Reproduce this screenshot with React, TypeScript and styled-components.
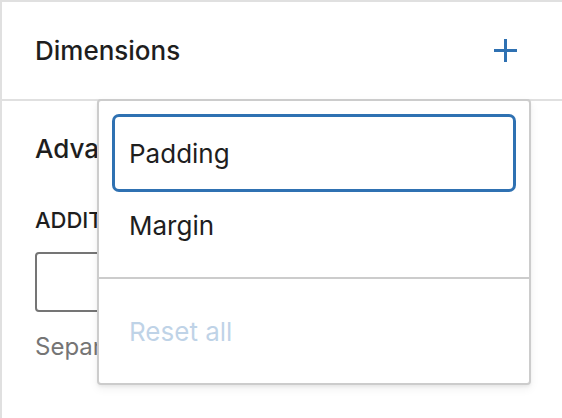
import React from "react";
import styled, { createGlobalStyle } from "styled-components";

const Global = createGlobalStyle`
  html, body { margin: 0; padding: 0; background: #fff; }
  body {
    font-family: Inter, "Noto Sans", "Liberation Sans", sans-serif;
    color: #1e1e1e;
    -webkit-font-smoothing: antialiased;
  }
  * { box-sizing: border-box; }
`;

const BLUE = "#2f71b2";

const Sidebar = styled.div`
  position: relative;
  width: 562px;
  height: 418px;
  overflow: hidden;
  border-top: 2px solid #e0e0e0;
  border-left: 2px solid #e0e0e0;
  background: #fff;
`;

const PanelHeader = styled.div`
  height: 99px;
  padding: 0 32px 0 33px;
  display: flex;
  align-items: center;
  justify-content: space-between;
  border-bottom: 2px solid #e0e0e0;
`;

const PanelTitle = styled.h2`
  margin: 0;
  font-size: 26px;
  line-height: 32px;
  font-weight: 500;
  color: #1e1e1e;
  white-space: nowrap;
`;

const IconButton = styled.button`
  width: 48px;
  height: 48px;
  padding: 0;
  border: none;
  background: transparent;
  display: flex;
  align-items: center;
  justify-content: center;
  color: ${BLUE};
`;

const PanelBody = styled.div`
  padding: 32px 32px 0 33px;
  display: flex;
  flex-direction: column;
`;

const FieldLabel = styled.label`
  margin-top: 39px;
  font-size: 22px;
  line-height: 32px;
  font-weight: 500;
  text-transform: uppercase;
  color: #1e1e1e;
  white-space: nowrap;
`;

const TextInput = styled.input`
  margin-top: 16px;
  height: 60px;
  width: 100%;
  border: 2px solid #757575;
  border-radius: 4px;
  background: #fff;
  font: inherit;
`;

const Help = styled.p`
  margin: 19px 0 0;
  font-size: 24px;
  line-height: 32px;
  color: #757575;
  white-space: nowrap;
`;

const Popover = styled.div`
  position: absolute;
  left: 95px;
  top: 97px;
  width: 434px;
  background: #fff;
  border: 2px solid #cccccc;
  border-radius: 4px;
  box-shadow: 0 2px 3px rgba(0, 0, 0, 0.05), 0 4px 10px rgba(0, 0, 0, 0.06);
`;

const Group = styled.div`
  padding: 16px;
  display: flex;
  flex-direction: column;
`;

const Divider = styled.div`
  height: 2px;
  background: #cccccc;
`;

const Item = styled.button<{ $focused?: boolean; $disabled?: boolean }>`
  position: relative;
  z-index: ${(p) => (p.$focused ? 1 : 0)};
  height: 72px;
  padding: 0 14px;
  display: flex;
  align-items: center;
  border: none;
  border-radius: 4px;
  background: transparent;
  font-family: inherit;
  font-size: 26px;
  font-weight: 400;
  text-align: left;
  color: ${(p) => (p.$disabled ? BLUE : "#1e1e1e")};
  opacity: ${(p) => (p.$disabled ? 0.3 : 1)};
  outline: none;
  box-shadow: ${(p) => (p.$focused ? `0 0 0 3px ${BLUE}` : "none")};
`;

function PlusIcon() {
  return (
    <svg width="48" height="48" viewBox="0 0 24 24" fill="currentColor" aria-hidden>
      <path d="M11 12.5V17.5H12.5V12.5H17.5V11H12.5V6H11V11H6V12.5H11Z" />
    </svg>
  );
}

export default function App() {
  return (
    <>
      <Global />
      <Sidebar>
        <PanelHeader>
          <PanelTitle>Dimensions</PanelTitle>
          <IconButton aria-label="Dimensions options">
            <PlusIcon />
          </IconButton>
        </PanelHeader>
        <PanelBody>
          <PanelTitle>Advanced</PanelTitle>
          <FieldLabel>Additional CSS class(es)</FieldLabel>
          <TextInput />
          <Help>Separate multiple classes with spaces.</Help>
        </PanelBody>
        <Popover role="menu">
          <Group>
            <Item $focused>Padding</Item>
            <Item>Margin</Item>
          </Group>
          <Divider />
          <Group>
            <Item $disabled>Reset all</Item>
          </Group>
        </Popover>
      </Sidebar>
    </>
  );
}
